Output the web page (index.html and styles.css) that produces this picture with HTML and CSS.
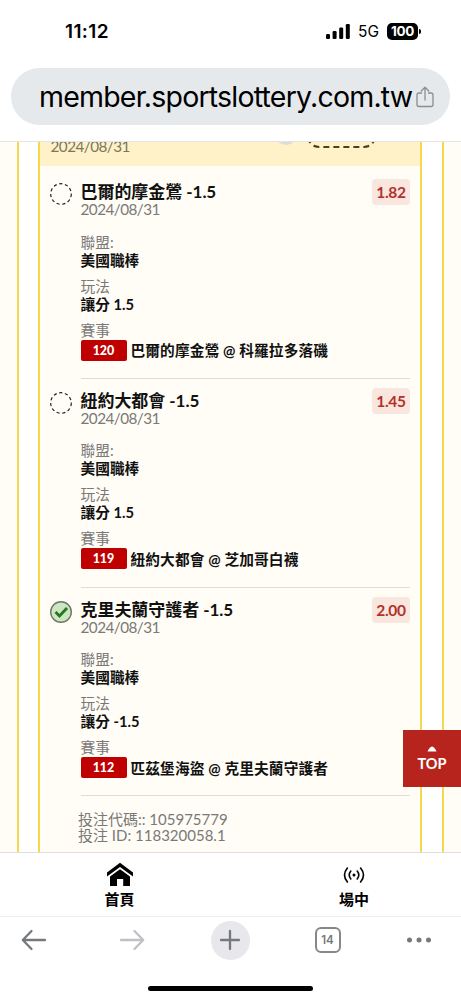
FILE: index.html
```html
<!DOCTYPE html>
<html lang="zh-Hant">
<head>
<meta charset="utf-8">
<meta name="viewport" content="width=device-width, initial-scale=1">
<title>member.sportslottery.com.tw</title>
<link rel="stylesheet" href="styles.css">
</head>
<body>
<header class="status">
  <span class="time">11:12</span>
  <div class="signals">
    <svg class="bars" width="24" height="15" viewBox="0 0 24 15"><rect x="0" y="10" width="4" height="5" rx="1.2"/><rect x="6.6" y="7" width="4" height="8" rx="1.2"/><rect x="13.2" y="3.5" width="4" height="11.5" rx="1.2"/><rect x="19.8" y="0" width="4" height="15" rx="1.2"/></svg>
    <span class="net">5G</span>
    <span class="battery">100</span><i class="nub"></i>
  </div>
</header>
<div class="address-row">
  <div class="address">
    <span class="url">member.sportslottery.com.tw</span>
    <svg class="share" width="18" height="22" viewBox="0 0 18 22"><path d="M5.5 7H3Q1 7 1 9V18.5Q1 20.5 3 20.5H15Q17 20.5 17 18.500V9Q17 7 15 7H12.500M9 14V1.500M5.200 5L9 1.300L12.800 5"/></svg>
  </div>
</div>
<main class="page">
  <div class="outer">
    <div class="ticket">
      <div class="summary"><span class="summary-date">2024/08/31</span><i class="dot"></i><i class="dashed"></i></div>
      <section class="leg">
        <svg class="mark" width="24" height="24" viewBox="0 0 24 24"><circle class="open" cx="12" cy="12" r="10.3"/></svg>
        <div class="info">
          <h2>巴爾的摩金鶯 -1.5</h2><p class="date">2024/08/31</p>
          <dl><dt>聯盟:</dt><dd>美國職棒</dd><dt>玩法</dt><dd>讓分 1.5</dd><dt>賽事</dt><dd class="match"><b>120</b><span>巴爾的摩金鶯 @ 科羅拉多落磯</span></dd></dl>
        </div>
        <span class="odds">1.82</span>
      </section>
      <section class="leg">
        <svg class="mark" width="24" height="24" viewBox="0 0 24 24"><circle class="open" cx="12" cy="12" r="10.3"/></svg>
        <div class="info">
          <h2>紐約大都會 -1.5</h2><p class="date">2024/08/31</p>
          <dl><dt>聯盟:</dt><dd>美國職棒</dd><dt>玩法</dt><dd>讓分 1.5</dd><dt>賽事</dt><dd class="match"><b>119</b><span>紐約大都會 @ 芝加哥白襪</span></dd></dl>
        </div>
        <span class="odds">1.45</span>
      </section>
      <section class="leg">
        <svg class="mark" width="24" height="24" viewBox="0 0 24 24"><circle class="won" cx="12" cy="12" r="10.3"/><path class="tick" d="M6.500 12L10.500 16L18 8"/></svg>
        <div class="info">
          <h2>克里夫蘭守護者 -1.5</h2><p class="date">2024/08/31</p>
          <dl><dt>聯盟:</dt><dd>美國職棒</dd><dt>玩法</dt><dd>讓分 -1.5</dd><dt>賽事</dt><dd class="match"><b>112</b><span>匹茲堡海盜 @ 克里夫蘭守護者</span></dd></dl>
        </div>
        <span class="odds">2.00</span>
      </section>
      <div class="ids"><p>投注代碼:: 105975779</p><p>投注 ID: 118320058.1</p></div>
    </div>
  </div>
  <a class="top"><svg width="10" height="6" viewBox="0 0 10 6"><path d="M0.500 5.500Q2.500 1 5 0.500Q7.500 1 9.500 5.500Z"/></svg><span>TOP</span></a>
</main>
<nav class="tabs">
  <a class="tab"><svg width="28" height="26" viewBox="0 0 28 26"><path d="M1 10.500L14 .8L27 10.500V14.500L14 5L1 14.500Z"/><path d="M4 14.500L14 7.200L24 14.500V24H17.200V17H11V24H4Z"/></svg><span>首頁</span></a>
  <a class="tab"><svg class="live" width="22" height="26" viewBox="0 0 22 26"><circle cx="11" cy="13" r="1.500"/><path d="M7.800 9Q4.600 13 7.800 17M14.200 9Q17.400 13 14.200 17M4.400 6Q-1.400 13 4.400 20M17.600 6Q23.400 13 17.600 20"/></svg><span>場中</span></a>
</nav>
<footer class="toolbar">
  <svg width="26" height="22" viewBox="0 0 26 22"><path d="M24 11H2M10.500 2L1.800 11L10.500 20"/></svg>
  <svg class="off" width="26" height="22" viewBox="0 0 26 22"><path d="M2 11H24M15.500 2L24.200 11L15.500 20"/></svg>
  <span class="plus"><svg width="22" height="22" viewBox="0 0 22 22"><path d="M11 2V20M2 11H20"/></svg></span>
  <span class="count">14</span>
  <svg class="more" width="26" height="6" viewBox="0 0 26 6"><circle cx="3.500" cy="3" r="2.500"/><circle cx="13" cy="3" r="2.500"/><circle cx="22.500" cy="3" r="2.500"/></svg>
</footer>
<div class="home"></div>
</body>
</html>
```
FILE: styles.css
```css
* { box-sizing: border-box; }
body { margin: 0; width: 461px; height: 1000px; overflow: hidden; background: #fff; color: #111; display: flex; flex-direction: column; font-family: Lato, "Noto Sans CJK TC", sans-serif; }
h2, p, dl, dd { margin: 0; }
svg { display: block; flex: none; }
.status { height: 68px; padding: 6px 40px 12px 65px; display: flex; justify-content: space-between; align-items: center; font-family: Inter, sans-serif; color: #000; }
.time { font-size: 19px; font-weight: 600; letter-spacing: .4px; }
.signals { display: flex; align-items: center; }
.net { font-size: 15.5px; margin: 1px 8px 0; }
.battery { width: 31px; height: 17px; border-radius: 5px; background: #000; color: #fff; font-size: 13.5px; font-weight: 700; line-height: 17px; text-align: center; letter-spacing: -.3px; }
.nub { width: 2px; height: 5px; margin-left: 1px; background: #000; border-radius: 0 2px 2px 0; }
.address-row { height: 74px; padding: 0 11px; border-bottom: 1px solid #e4e4e4; }
.address { height: 57px; border-radius: 29px; background: #e6e9ec; display: flex; align-items: center; padding: 0 16px 0 28px; justify-content: space-between; }
.url { font: 28.5px/40px Inter, sans-serif; letter-spacing: -.79px; color: #000; white-space: nowrap; }
.share { fill: none; stroke: #8a8d91; stroke-width: 1.3; stroke-linecap: round; stroke-linejoin: round; }
.page { position: relative; height: 710px; background: #fffdf5; padding: 0 17px; overflow: hidden; }
.outer { border: solid #f6d84e; border-width: 0 2px; background: #fff; height: 100%; padding: 0 20px 0 19px; }
.ticket { border: solid #f6d84e; border-width: 0 2px; background: #fffdf5; height: 100%; }
.summary { height: 24px; margin-bottom: 4px; background: #fff1c8; display: flex; align-items: flex-start; }
.summary-date { width: 80px; font-size: 15.3px; line-height: 18px; letter-spacing: -.55px; margin: -5px 0 0 10.5px; color: #7c765f; }
.dot { width: 22px; height: 22px; border-radius: 50%; background: #dcdcda; margin: -19px 0 0 144px; }
.dashed { width: 69px; height: 40px; border: 2px dashed #4b4020; border-radius: 12px; margin: -34px 0 0 10px; }
.leg { height: 208.8px; display: flex; align-items: flex-start; padding: 12px 10px 0 8.5px; }
.mark { margin: 0 8px 0 0; }
.open { fill: none; stroke: #222; stroke-width: 1.2; stroke-dasharray: 3.200 2.600; }
.won { fill: #cce6c2; stroke: #6c7769; stroke-width: 1.4; }
.tick { fill: none; stroke: #26751f; stroke-width: 2.8; }
.info { height: 196.800px; flex: 1; border-bottom: 1px solid #dddbd5; white-space: nowrap; min-width: 0; margin-right: -38px; }
.info h2 { font-size: 17px; line-height: 20px; font-weight: 700; letter-spacing: -.05px; }
.date { font-size: 15.3px; line-height: 17px; margin-top: -1px; letter-spacing: -.55px; color: #797979; }
dl { margin-top: 14.6px; font-size: 14.7px; line-height: 18px; }
dt { color: #797979; }
dd { font-weight: 700; margin-bottom: 8px; }
.match { display: flex; align-items: center; gap: 4px; height: 21px; margin-top: 1px; }
.match span { letter-spacing: .12px; }
.match b { width: 46px; height: 21px; border-radius: 2px; background: #c00000; color: #fff; font-size: 12.5px; line-height: 21px; text-align: center; }
.odds { width: 38px; height: 26px; margin-top: -3px; border-radius: 4px; background: #f9e6df; color: #b23229; font-size: 15.5px; letter-spacing: -.3px; font-weight: 700; line-height: 26px; text-align: center; z-index: 1; }
.ids { padding: 14.5px 0 0 38px; font-size: 15px; line-height: 16.500px; color: #797979; }
.top { position: absolute; right: 0; top: 588px; width: 58px; height: 57px; background: #b7241d; color: #fff; display: flex; flex-direction: column; align-items: center; padding-top: 16px; font-size: 14.500px; font-weight: 700; line-height: 24px; }
.top svg { fill: #fff; }
.tabs { height: 65px; border-top: 1px solid #dedede; border-bottom: 1px solid #eee; display: grid; grid-template-columns: 239px 1fr; }
.tab { display: flex; flex-direction: column; align-items: center; padding-top: 9px; font-size: 15px; font-weight: 700; line-height: 22px; color: #000; }
.tab:last-child { padding-left: 8px; }
.live path { fill: none; stroke: #000; stroke-width: 1.6; stroke-linecap: round; }
.toolbar { height: 46px; padding: 0 29px 0 21px; display: grid; grid-template-columns: 98px 91.500px 104px 91px 26px; align-items: center; }
.toolbar path { fill: none; stroke: #75787c; stroke-width: 2.3; stroke-linecap: round; stroke-linejoin: round; }
.toolbar .off path { stroke: #bfc0c3; }
.plus { width: 39px; height: 39px; border-radius: 50%; background: #e7e7ec; display: grid; place-items: center; }
.count { width: 26px; height: 26px; border: 2px solid #85888b; border-radius: 6px; color: #75787c; font: 600 11.500px/22px Inter, sans-serif; text-align: center; }
.more { fill: #75787c; }
.home { width: 165px; height: 5px; border-radius: 3px; background: #000; margin: 23px 0 0 148px; }
```
